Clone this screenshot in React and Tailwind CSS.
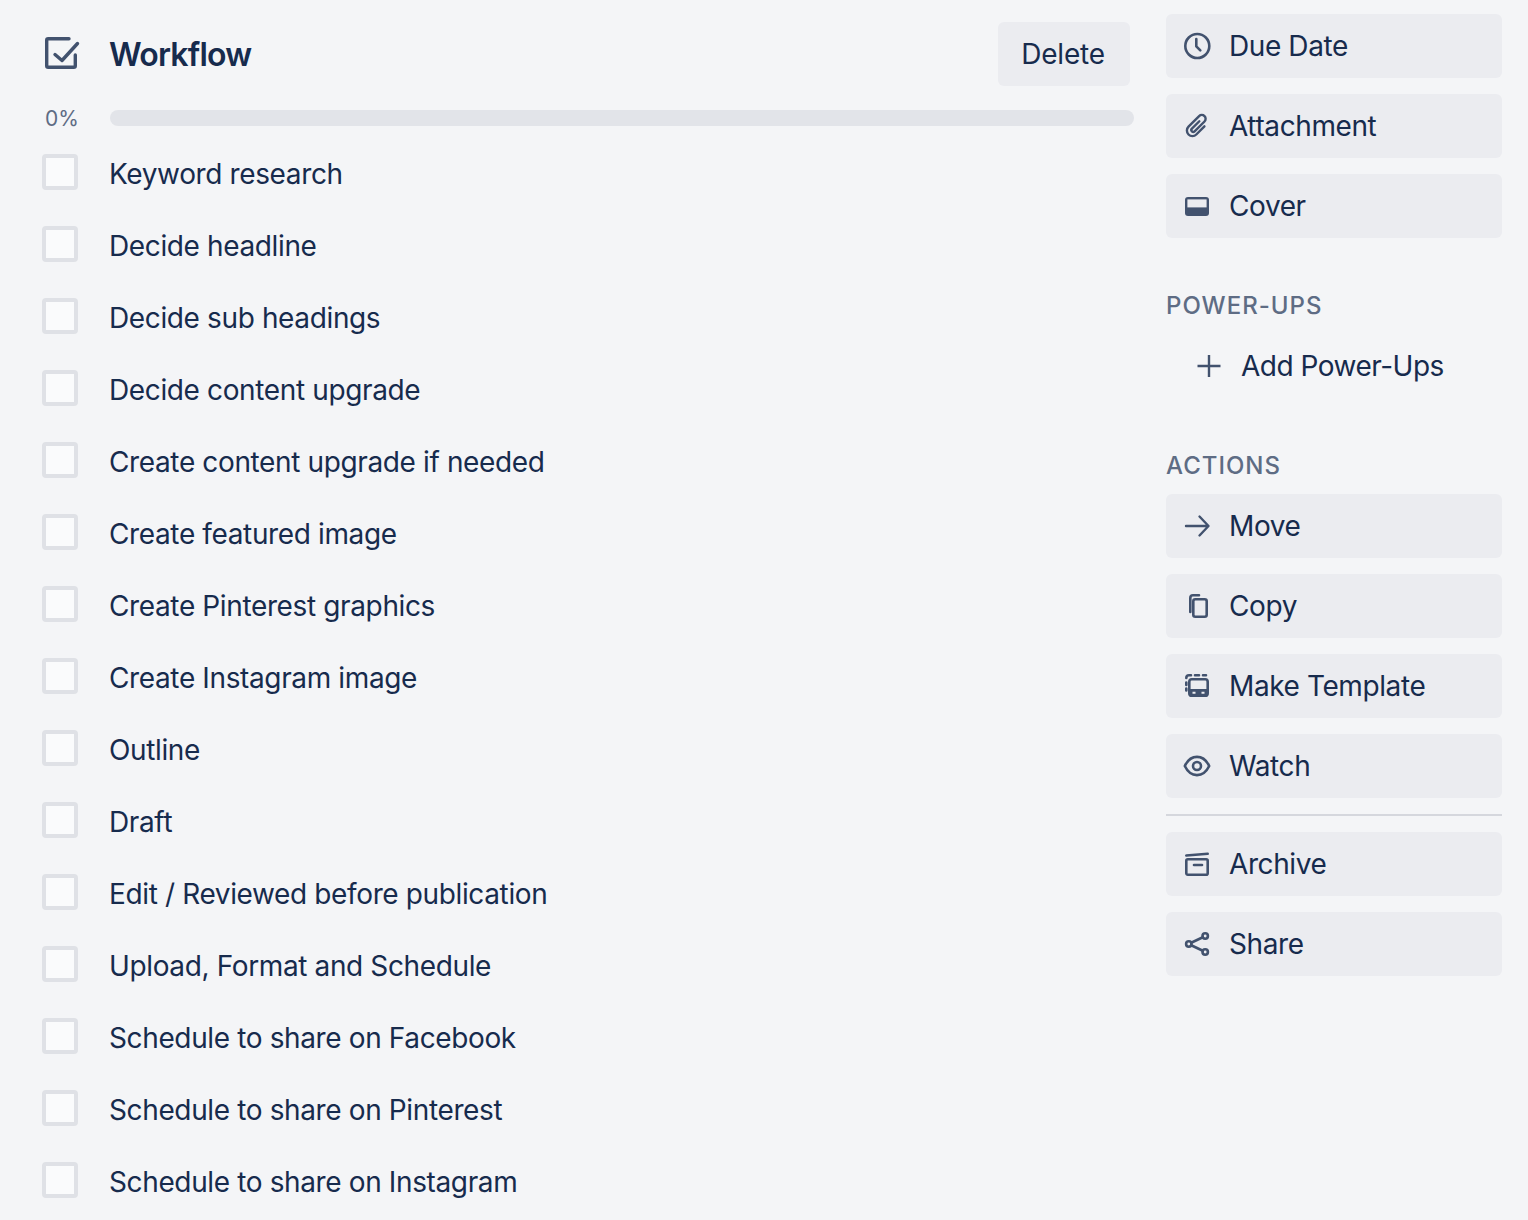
const ITEMS = [
  "Keyword research",
  "Decide headline",
  "Decide sub headings",
  "Decide content upgrade",
  "Create content upgrade if needed",
  "Create featured image",
  "Create Pinterest graphics",
  "Create Instagram image",
  "Outline",
  "Draft",
  "Edit / Reviewed before publication",
  "Upload, Format and Schedule",
  "Schedule to share on Facebook",
  "Schedule to share on Pinterest",
  "Schedule to share on Instagram",
];

const stroke = { fill: "none", stroke: "#42526e", strokeWidth: 2.6, strokeLinecap: "round", strokeLinejoin: "round" };

const Clock = () => (
  <svg viewBox="0 0 32 32" className="w-8 h-8">
    <circle cx="16.300" cy="16" r="12" {...stroke} />
    <path d="M15.300 9v7.300l4 4" {...stroke} />
  </svg>
);
const Clip = () => (
  <svg viewBox="0 0 32 32" className="w-8 h-8">
    <path
      d="M21.500 11v11.500a5.500 5.500 0 0 1-11 0V7.500a3.800 3.800 0 0 1 7.600 0v14a1.900 1.900 0 0 1-3.800 0V11"
      transform="rotate(45 16 16)"
      {...stroke}
      strokeWidth="2.400"
    />
  </svg>
);
const Cover = () => (
  <svg viewBox="0 0 32 32" className="w-8 h-8">
    <rect x="4" y="7" width="24" height="19" rx="3" fill="#42526e" />
    <rect x="6.400" y="9.400" width="19.200" height="8" fill="#ebecf0" />
  </svg>
);
const Plus = () => (
  <svg viewBox="0 0 32 32" className="w-8 h-8">
    <path d="M16 5v22M4.500 16h23" {...stroke} strokeLinecap="butt" strokeWidth="2.400" />
  </svg>
);
const Arrow = () => (
  <svg viewBox="0 0 32 32" className="w-8 h-8">
    <path d="M5 16h22M18.500 6.500 27.500 16l-9 9.500" {...stroke} strokeWidth="2.400" />
  </svg>
);
const Copy = () => (
  <svg viewBox="0 0 32 32" className="w-8 h-8">
    <rect x="12.300" y="9.300" width="13.400" height="17.400" rx="2" {...stroke} />
    <path d="M9.300 22V8c0-1.800.9-2.700 2.700-2.700h6" {...stroke} />
  </svg>
);
const Template = () => (
  <svg viewBox="0 0 32 32" className="w-8 h-8">
    <path d="M5.300 8c0-1.800.9-2.700 2.700-2.700h2" {...stroke} />
    <path d="M14 5.300h4M22 5.300h3" {...stroke} />
    <path d="M5.300 12.500v2.500M5.300 18.500v2" {...stroke} />
    <rect x="8.300" y="9.300" width="18.400" height="16.400" rx="2.500" {...stroke} />
    <path d="M8 19h19v6c0 1.300-.7 2-2 2H10c-1.300 0-2-.7-2-2z" fill="#42526e" />
    <path d="M11.500 22.800h3M20.500 22.800h3" stroke="#ebecf0" strokeWidth="2" />
  </svg>
);
const Eye = () => (
  <svg viewBox="0 0 32 32" className="w-8 h-8">
    <path d="M3.800 16C6.700 10 11.200 6.900 16 6.900S25.300 10 28.200 16c-2.900 6-7.400 9.100-12.200 9.100S6.700 22 3.800 16z" {...stroke} />
    <circle cx="16" cy="16" r="4" {...stroke} />
  </svg>
);
const Archive = () => (
  <svg viewBox="0 0 32 32" className="w-8 h-8">
    <path d="M5.300 7.500 26.700 5.800" {...stroke} />
    <rect x="5.300" y="11.300" width="21.400" height="15.400" rx="1.500" {...stroke} />
    <path d="M13 17h8" {...stroke} />
  </svg>
);
const Share = () => (
  <svg viewBox="0 0 32 32" className="w-8 h-8">
    <path d="M10.200 14.700 21.800 9.300M10.200 17.300l11.600 5.400" {...stroke} />
    <circle cx="7.800" cy="16" r="2.700" {...stroke} />
    <circle cx="24.200" cy="8" r="2.700" {...stroke} />
    <circle cx="24.200" cy="24" r="2.700" {...stroke} />
  </svg>
);

const SideButton = ({ icon: Icon, label }) => (
  <button className="h-16 w-full rounded-md bg-[#ebecf0] flex items-center pl-[15px] text-[28px] tracking-[-0.4px] text-[#172b4d]">
    <Icon />
    <span className="ml-4">{label}</span>
  </button>
);

const SectionTitle = ({ children, className }) => (
  <h3 className={`text-[24px] leading-8 font-medium tracking-[1px] text-[#5e6c84] ${className}`}>{children}</h3>
);

export default function App() {
  return (
    <div className="h-[1220px] overflow-hidden bg-[#f4f5f7] flex font-['Inter',sans-serif] text-[#172b4d]">
      {/* Checklist */}
      <div className="w-[1134px] pl-[42px] pt-[22px] shrink-0">
        <div className="flex items-center h-16 pr-1">
          <svg viewBox="0 0 36 36" className="w-9 h-9 overflow-visible">
            <path d="M33.300 19v10.800c0 1-.5 1.500-1.500 1.500H6.200c-1 0-1.500-.5-1.500-1.500V4.200c0-1 .5-1.500 1.500-1.500H27" {...stroke} strokeWidth="3.400" />
            <path d="M13 18.500 20 24.500 35.500 7.500" {...stroke} strokeWidth="3.400" />
          </svg>
          <h2 className="ml-[31px] pt-0.5 text-[32px] font-semibold tracking-[-0.8px]">Workflow</h2>
          <button className="ml-auto h-16 w-[132px] pr-0.5 rounded-md bg-[#ebecf0] text-[28px] tracking-[-0.2px]">Delete</button>
        </div>
        <div className="flex items-center h-4 mt-6">
          <span className="ml-[3px] w-[65px] pt-0.5 text-[21px] text-[#5e6c84]">0%</span>
          <div className="flex-1 h-4 rounded-lg bg-[#e2e4e9]" />
        </div>
        <ul className="mt-[28px]">
          {ITEMS.map((item) => (
            <li key={item} className="h-[72px] flex">
              <span className="w-9 h-9 rounded-[4px] border-4 border-[#dfe1e6] bg-[#fafbfc]" />
              <span className="ml-[31px] text-[28px] leading-10 tracking-[-0.37px]">{item}</span>
            </li>
          ))}
        </ul>
      </div>

      {/* Sidebar */}
      <div className="ml-8 w-[336px] pt-[14px] shrink-0">
        <div className="flex flex-col gap-4">
          <SideButton icon={Clock} label="Due Date" />
          <SideButton icon={Clip} label="Attachment" />
          <SideButton icon={Cover} label="Cover" />
        </div>
        <SectionTitle className="mt-[52px]">POWER-UPS</SectionTitle>
        <div className="h-16 mt-[12px] flex items-center pl-[27px] text-[28px] tracking-[-0.5px]">
          <Plus />
          <span className="ml-4">Add Power-Ups</span>
        </div>
        <SectionTitle className="mt-[52px]">ACTIONS</SectionTitle>
        <div className="flex flex-col gap-4 mt-3">
          <SideButton icon={Arrow} label="Move" />
          <SideButton icon={Copy} label="Copy" />
          <SideButton icon={Template} label="Make Template" />
          <SideButton icon={Eye} label="Watch" />
        </div>
        <div className="h-0.5 bg-[#d5d7dd] mt-4 mb-4" />
        <div className="flex flex-col gap-4">
          <SideButton icon={Archive} label="Archive" />
          <SideButton icon={Share} label="Share" />
        </div>
      </div>
    </div>
  );
}
